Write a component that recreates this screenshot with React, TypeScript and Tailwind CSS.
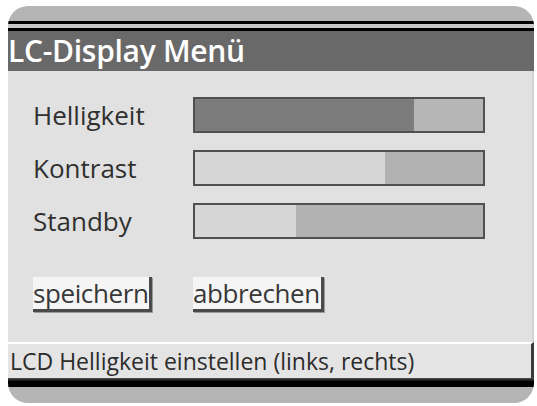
import React from "react";

const rows = [
  { label: "Helligkeit", value: 76, fill: "bg-[#7c7c7c]", rest: "bg-[#b6b6b6]" },
  { label: "Kontrast", value: 66, fill: "bg-[#d6d6d6]", rest: "bg-[#b2b2b2]" },
  { label: "Standby", value: 35, fill: "bg-[#d6d6d6]", rest: "bg-[#b2b2b2]" },
];

function Bar({ value, fill, rest }: { value: number; fill: string; rest: string }) {
  return (
    <div className={`flex w-[292px] h-[36px] border-2 border-[#505050] ${rest}`}>
      <div className={`h-full ${fill}`} style={{ width: `${value}%` }} />
    </div>
  );
}

function Button({ children }: { children: React.ReactNode }) {
  return (
    <div className="h-[35px] flex items-center bg-[#f5f5f5] border-b-[3px] border-r-[3px] border-[#4a4a4a] shadow-[1px_1px_0_#9a9a9a] text-[26px] leading-none tracking-[-0.4px] text-[#383838] pr-[1px]">
      {children}
    </div>
  );
}

export default function App() {
  return (
    <div
      className="w-[537px] h-[406px] bg-white pt-[6px] pl-[8px] pr-[3px] overflow-hidden"
      style={{ fontFamily: '"Open Sans", "Noto Sans", sans-serif' }}
    >
      <div className="flex flex-col h-[397px] rounded-[20px] bg-[#b5b5b5] overflow-hidden">
        <div className="h-[15px] shrink-0" />
        <div className="h-[3px] bg-black shrink-0" />
        <div className="h-[4px] bg-[#c9c9c9] shrink-0" />
        <div className="h-[3px] bg-black shrink-0" />
        <div className="h-[40px] shrink-0 bg-[#696969] flex items-center text-white text-[30px] font-semibold leading-none tracking-[-0.3px]">
          LC-Display Menü
        </div>

        <div className="h-[271px] shrink-0 bg-[#e1e1e1] pl-[25px] pt-[26px] border-r-[2px] border-[#d2d2d2]">
          <div className="flex flex-col gap-[17px]">
            {rows.map((r) => (
              <div key={r.label} className="flex items-center">
                <div className="w-[160px] text-[26px] leading-none text-[#303030]">{r.label}</div>
                <Bar value={r.value} fill={r.fill} rest={r.rest} />
              </div>
            ))}
          </div>
          <div className="flex gap-[40px] mt-[38px]">
            <div className="w-[120px] flex">
              <Button>speichern</Button>
            </div>
            <Button>abbrechen</Button>
          </div>
        </div>

        <div className="h-[36px] shrink-0 bg-[#e4e4e4] border-t-2 border-white border-r-[3px] border-r-[#3a3a3a] flex items-center pl-[2px] text-[23px] leading-none text-[#2c2c2c]">
          LCD Helligkeit einstellen (links, rechts)
        </div>
        <div className="h-[9px] shrink-0 bg-gradient-to-b from-[#555] via-black to-black" />
        <div className="flex-1" />
      </div>
    </div>
  );
}
